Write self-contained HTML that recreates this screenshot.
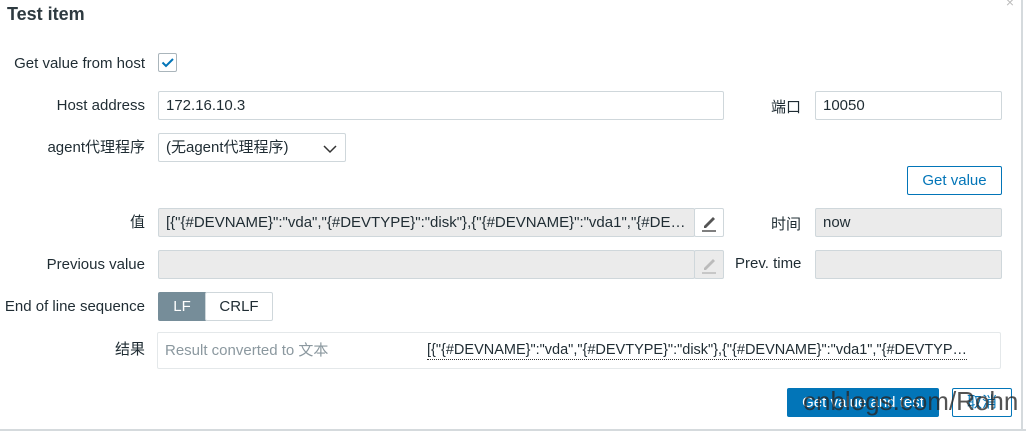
<html><head><style>
body{margin:0;width:1026px;height:431px;background:#fff;font-family:"Liberation Sans","Noto Sans CJK SC",sans-serif;font-size:15px;color:#1f2c33;position:relative;overflow:hidden}
.a{position:absolute}
.l{position:absolute;text-align:right;width:165px;left:-20px;line-height:20px;white-space:nowrap}
.in{position:absolute;box-sizing:border-box;border:1px solid #cfd7db;background:#fff;height:29px;line-height:27px;padding-left:7px;border-radius:2px;white-space:nowrap;overflow:hidden}
.ro{background:#ebebeb}
.btn{position:absolute;box-sizing:border-box;height:29px;line-height:27px;text-align:center;border:1px solid #0275b8;color:#0275b8;border-radius:2px;background:#fff}
</style></head><body>
<div class="a" style="left:7px;top:4px;font-size:18px;font-weight:bold;color:#2e3a40">Test item</div>
<div class="a" style="right:12px;top:-6px;color:#bbb;font-size:14px">×</div>
<div class="a" style="left:1021px;top:0;width:2px;height:431px;background:#d5dadd"></div>
<div class="a" style="left:0;top:429px;width:1026px;height:2px;background:#d5dadd"></div>
<div class="l" style="top:54px">Get value from host</div>
<div class="a" style="left:158px;top:53px;width:19px;height:19px;box-sizing:border-box;border:1px solid #aab5bb;border-radius:2px"><svg width="17" height="17" style="position:absolute;left:0;top:0"><path d="M3.5 8.5l3.5 3.5 7-7" stroke="#0275b8" stroke-width="2" fill="none"/></svg></div>
<div class="l" style="top:96px">Host address</div>
<div class="in" style="left:158px;top:91px;width:566px">172.16.10.3</div>
<div class="a" style="left:771px;top:96px">端口</div>
<div class="in" style="left:815px;top:91px;width:187px">10050</div>
<div class="l" style="top:138px">agent代理程序</div>
<div class="in" style="left:158px;top:133px;width:188px">(无agent代理程序)<svg width="14" height="10" style="position:absolute;right:8px;top:10px"><path d="M1 2l6 6 6-6" stroke="#333" stroke-width="1.5" fill="none"/></svg></div>
<div class="btn" style="left:907px;top:166px;width:95px">Get value</div>
<div class="l" style="top:213px">值</div>
<div class="in ro" style="left:158px;top:208px;width:537px">[{"{#DEVNAME}":"vda","{#DEVTYPE}":"disk"},{"{#DEVNAME}":"vda1","{#DE…</div>
<div class="in" style="left:694px;top:208px;width:30px;padding:0"><svg width="28" height="27"><path d="M9 17l9-9 2 2-9 9H9z" fill="#555"/><path d="M7 22h14" stroke="#555" stroke-width="1.5"/></svg></div>
<div class="a" style="left:771px;top:213px">时间</div>
<div class="in ro" style="left:815px;top:208px;width:187px">now</div>
<div class="l" style="top:255px">Previous value</div>
<div class="in ro" style="left:158px;top:250px;width:537px"></div>
<div class="in ro" style="left:694px;top:250px;width:30px;padding:0"><svg width="28" height="27"><path d="M9 17l9-9 2 2-9 9H9z" fill="#bbb"/><path d="M7 22h14" stroke="#bbb" stroke-width="1.5"/></svg></div>
<div class="a" style="left:735px;top:255px">Prev. time</div>
<div class="in ro" style="left:815px;top:250px;width:187px"></div>
<div class="l" style="top:297px">End of line sequence</div>
<div class="a" style="left:158px;top:292px;width:48px;height:29px;line-height:29px;background:#768d99;color:#fff;text-align:center;border-radius:2px 0 0 2px">LF</div>
<div class="in" style="left:205px;top:292px;width:68px;text-align:center;padding:0">CRLF</div>
<div class="l" style="top:340px">结果</div>
<div class="in" style="left:157px;top:332px;width:844px;height:37px;line-height:35px;border-color:#e4e8ea;color:#8b989f">Result converted to 文本</div>
<div class="a" style="left:427px;top:341px;color:#1f2c33;border-bottom:1px dotted #333;line-height:18px;font-size:14.5px;white-space:nowrap">[{"{#DEVNAME}":"vda","{#DEVTYPE}":"disk"},{"{#DEVNAME}":"vda1","{#DEVTYP…</div>
<div class="a" style="left:787px;top:388px;width:152px;height:29px;line-height:29px;background:#0275b8;color:#fff;text-align:center;border-radius:2px">Get value and test</div>
<div class="btn" style="left:952px;top:388px;width:60px">取消</div>
<div class="a" style="left:803px;top:386px;font-size:26px;color:rgba(40,40,40,0.8);white-space:nowrap">cnblogs.com/Rohn</div>
</body></html>
